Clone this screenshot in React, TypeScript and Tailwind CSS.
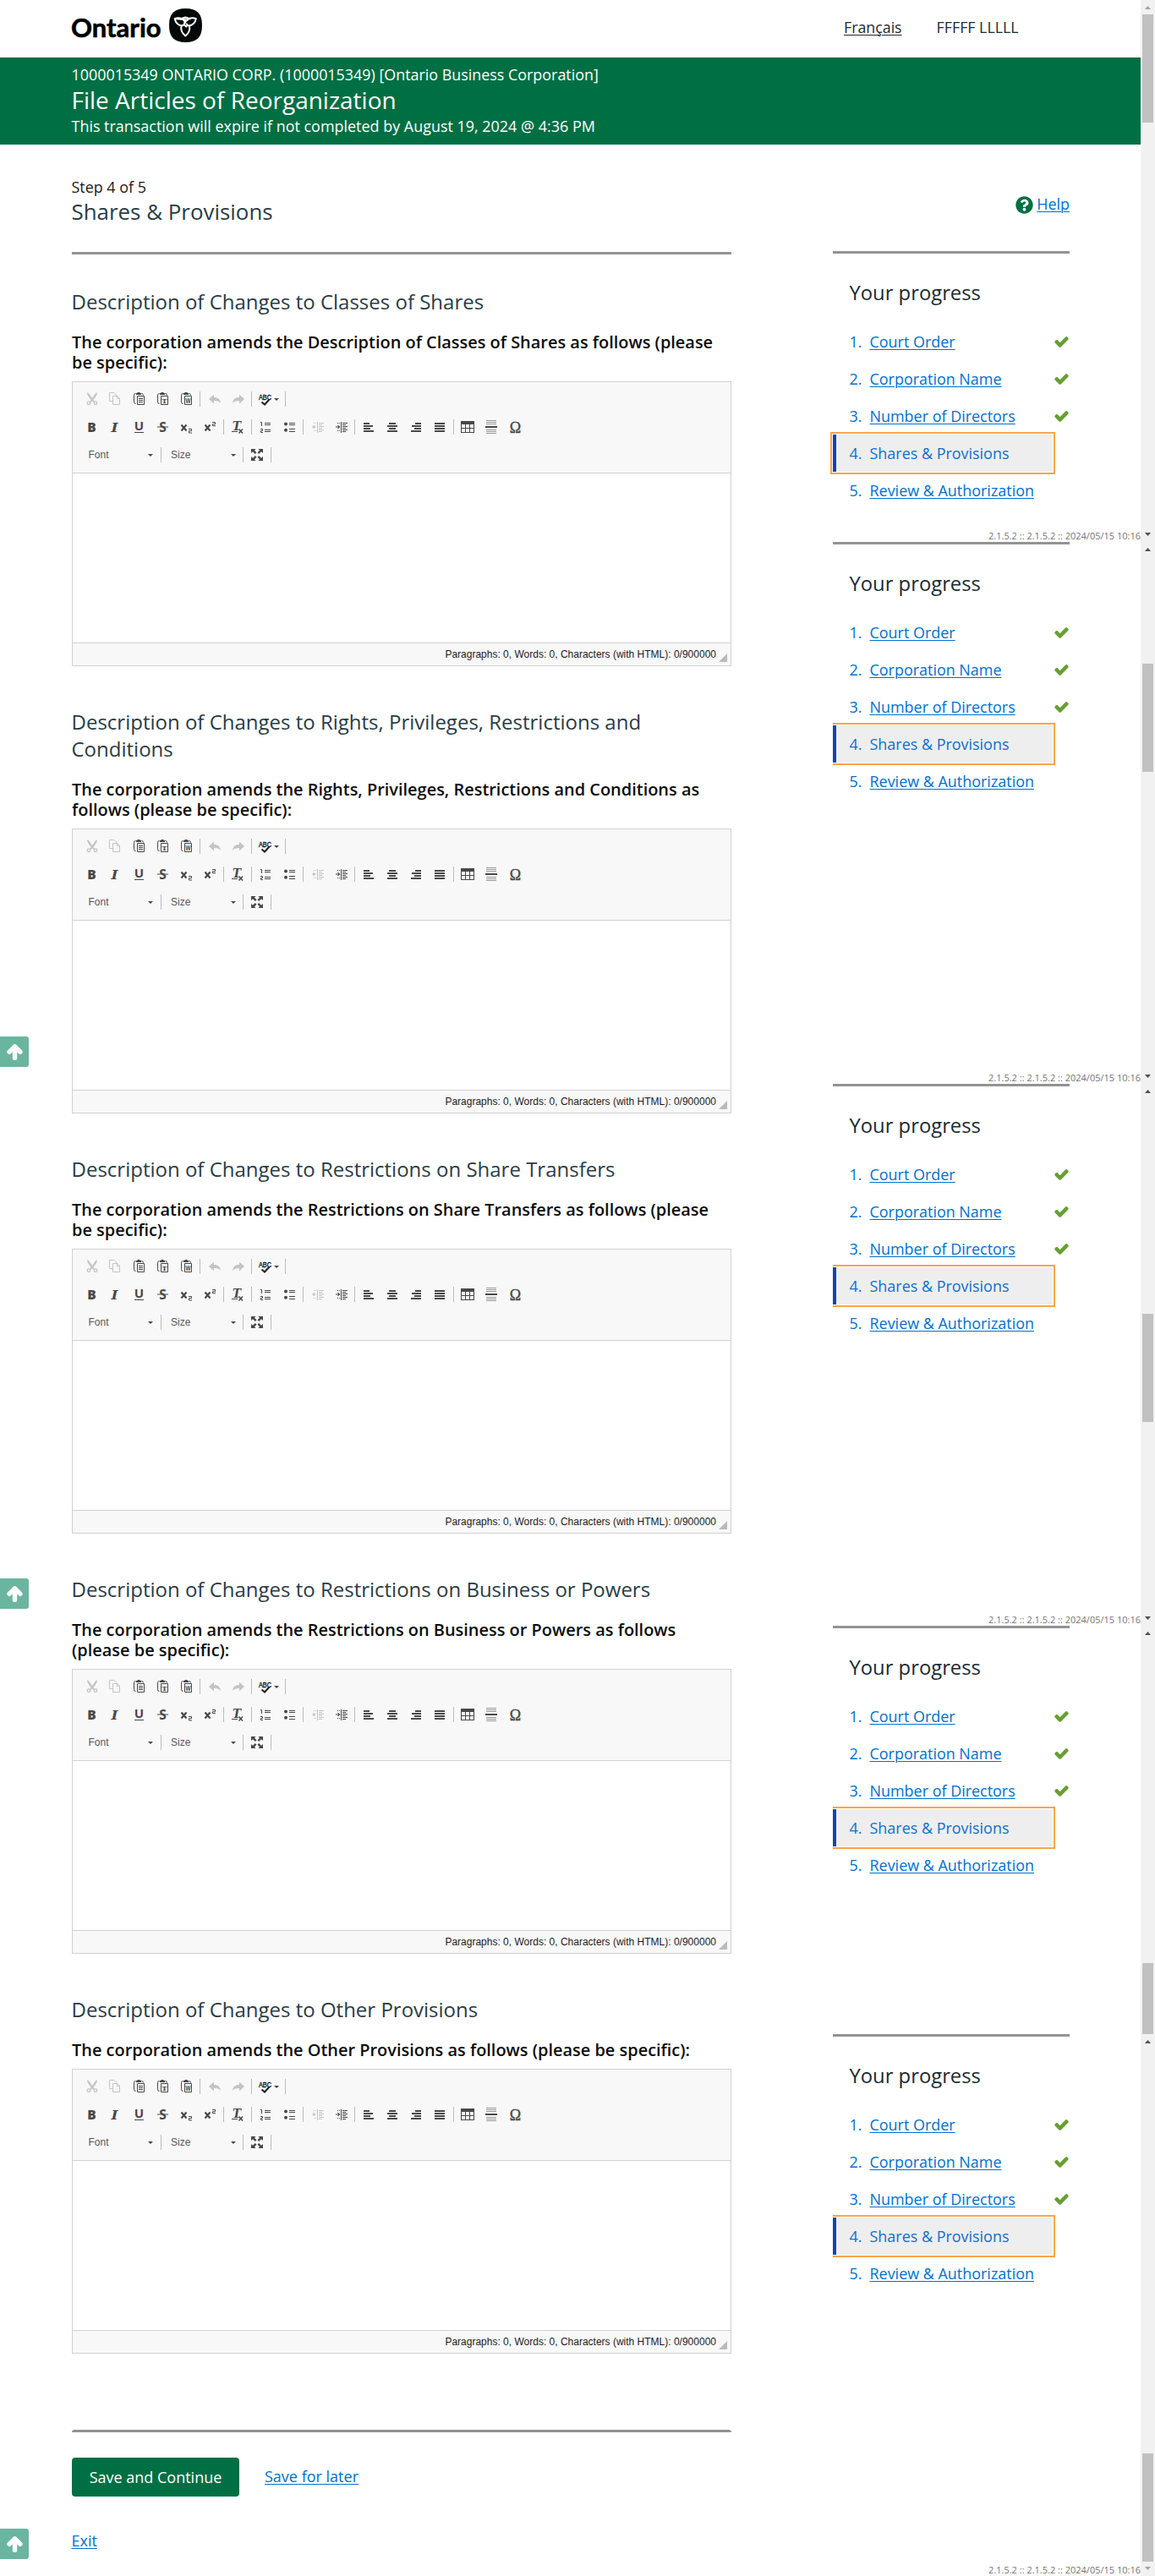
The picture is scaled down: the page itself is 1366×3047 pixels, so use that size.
import type { ReactNode } from "react";
import { FaArrowUp, FaCheck, FaQuestionCircle } from "react-icons/fa";

const DARK = "#484848";
const LIGHT = "#c4c4c4";

function Glyph({ children, light }: { children: ReactNode; light?: boolean }) {
  const c = light ? LIGHT : DARK;
  return (
    <svg viewBox="0 0 16 16" width="16" height="16" fill={c} stroke="none" className="mt-px shrink-0 overflow-visible" aria-hidden="true">
      {children}
    </svg>
  );
}

function Btn({ children, light }: { children: ReactNode; light?: boolean }) {
  return (
    <button type="button" className="flex w-7 shrink-0 justify-center">
      <Glyph light={light}>{children}</Glyph>
    </button>
  );
}

function Sep() {
  return <span className="ml-px mr-[3px] h-[18px] w-px shrink-0 bg-[#bcbcbc]" />;
}

function Caret() {
  return (
    <svg viewBox="0 0 6 3" width="6" height="3" fill={DARK} aria-hidden="true">
      <path d="M0 0h6L3 3z" />
    </svg>
  );
}

function Clipboard({ children }: { children: ReactNode }) {
  return (
    <>
      <path d="M3.5 1.5Q1.5 1.5 1.5 3.5V11.5Q1.5 13.5 3.5 13.500M10.500 1.500Q12.500 1.500 12.500 3.500" fill="none" stroke={DARK} />
      <path d="M4 1h1.500V0h3v1H10v2H4z" />
      <path d="M5.500 4.500h8v10h-8z" fill="#f8f8f8" stroke={DARK} />
      {children}
    </>
  );
}

const sans = "'Open Sans', sans-serif";
const serif = "'DejaVu Serif', serif";

function ToolbarRows() {
  return (
    <>
      <div className="flex h-[33px] items-start">
        <Btn light>
          <path d="M2 0.500Q3.500 0 4.500 2L8 7l3.500-5Q12.500 0 14 0.500Q14 3 12 5.500L9.300 9l1.700 2.200-1.300.8L8 10.500 6.300 12 5 11.200 6.700 9 4 5.500Q2 3 2 .500z" />
          <circle cx="4" cy="12.700" r="1.800" fill="none" stroke={LIGHT} strokeWidth="1.300" />
          <circle cx="12" cy="12.700" r="1.800" fill="none" stroke={LIGHT} strokeWidth="1.300" />
        </Btn>
        <Btn light>
          <path d="M4 10.500H.5V.500H6L8.500 3V4.500" fill="none" stroke={LIGHT} />
          <path d="M4.500 4.500H10L12.500 7.500V14.500H4.500zM9.500 4.500V7.500H12.500" fill="none" stroke={LIGHT} />
        </Btn>
        <Btn>
          <Clipboard>
            <path d="M7 7h5v1H7zM7 9h5v1H7zM7 11h5v1H7z" />
          </Clipboard>
        </Btn>
        <Btn>
          <Clipboard>
            <text x="9.500" y="12.500" fontSize="8" fontWeight="700" fontFamily={serif} textAnchor="middle" textLength="6" lengthAdjust="spacingAndGlyphs">T</text>
          </Clipboard>
        </Btn>
        <Btn>
          <Clipboard>
            <text x="9.500" y="12.500" fontSize="8" fontWeight="700" fontFamily={sans} textAnchor="middle" textLength="6" lengthAdjust="spacingAndGlyphs">W</text>
          </Clipboard>
        </Btn>
        <Sep />
        <Btn light>
          <path d="M1 8l6-5.500V6c5 0 7.500 2.500 8 7-1.500-2-4-3-8-3v3.500z" />
        </Btn>
        <Btn light>
          <path d="M15 8L9 2.500V6C4 6 1.500 8.500 1 13c1.500-2 4-3 8-3v3.500z" />
        </Btn>
        <Sep />
        <button type="button" className="flex w-[35px] shrink-0 justify-start pl-[5px]">
          <Glyph>
            <text x="0" y="8.800" fontSize="9" fill="#000" stroke="#000" strokeWidth="0.300" fontFamily="'Liberation Sans', sans-serif" textLength="15" lengthAdjust="spacingAndGlyphs">ABC</text>
            <path d="M3.500 11.500L7 14.500 12.500 8.500" fill="none" stroke="#222" strokeWidth="2" />
          </Glyph>
          <span className="ml-[2px] mt-[8px]"><Caret /></span>
        </button>
        <Sep />
      </div>

      <div className="flex h-[33px] items-start">
        <Btn>
          <text x="7.500" y="13.500" fontSize="15.500" fontWeight="800" fontFamily={sans} textAnchor="middle">B</text>
        </Btn>
        <Btn>
          <text x="6.500" y="13.500" fontSize="15" fontWeight="700" fontStyle="italic" fontFamily={serif} textAnchor="middle" textLength="8" lengthAdjust="spacingAndGlyphs">I</text>
        </Btn>
        <Btn>
          <text x="7.500" y="12" fontSize="15" fontWeight="700" fontFamily={sans} textAnchor="middle">U</text>
          <path d="M2 14h11v1H2z" />
        </Btn>
        <Btn>
          <text x="7.500" y="13.500" fontSize="15.500" fontWeight="700" fontFamily={sans} textAnchor="middle">S</text>
          <path d="M1 7.500h13v1H1z" />
        </Btn>
        <Btn>
          <path d="M1.500 5.500l6 7M7.500 5.500l-6 7" fill="none" stroke={DARK} strokeWidth="2.200" />
          <path d="M10 10.500h3.500v2.200h-3v2.300H14" fill="none" stroke={DARK} />
        </Btn>
        <Btn>
          <path d="M1.500 5.500l6 7M7.500 5.500l-6 7" fill="none" stroke={DARK} strokeWidth="2.200" />
          <path d="M10 2.500h3.500v2.200h-3v2H14" fill="none" stroke={DARK} />
        </Btn>
        <Sep />
        <Btn>
          <text x="6" y="12" fontSize="14" fontWeight="700" fontStyle="italic" fontFamily={serif} textAnchor="middle" textLength="10" lengthAdjust="spacingAndGlyphs">T</text>
          <path d="M0 13h7v1H0z" />
          <path d="M8.500 10.500l4.500 5M13 10.500l-4.500 5" fill="none" stroke={DARK} strokeWidth="1.500" />
        </Btn>
        <Sep />
        <Btn>
          <path d="M1 2.500h1.500V7M1 10.500h2.500v2H1.500v2H4" fill="none" stroke={DARK} />
          <path d="M6 3h7v1H6zM6 5h7v1H6zM6 11h7v1H6zM6 13h7v1H6z" />
        </Btn>
        <Btn>
          <circle cx="3" cy="4.500" r="2" />
          <circle cx="3" cy="11.700" r="2" />
          <path d="M7 3h7v1H7zM7 5h7v1H7zM7 10h7v1H7zM7 13h7v1H7z" />
        </Btn>
        <Sep />
        <Btn light>
          <path d="M7 2h1v13H7zM9 3h6v1H9zM9 5h4v1H9zM9 7h6v1H9zM9 9h4v1H9zM9 11h6v1H9zM9 13h4v1H9zM3 3h1v1H3zM5 3h1v1H5zM3 12h1v1H3zM5 12h1v1H5z" />
          <path d="M4 5.500v5L1 8zM4 7.500h2v1H4z" />
        </Btn>
        <Btn>
          <path d="M7 2h1v13H7zM9 3h6v1H9zM9 5h4v1H9zM9 7h6v1H9zM9 9h4v1H9zM9 11h6v1H9zM9 13h4v1H9zM3 3h1v1H3zM5 3h1v1H5zM3 12h1v1H3zM5 12h1v1H5z" />
          <path d="M3.500 5.500v5L6.500 8zM1 7.500h3v1H1z" />
        </Btn>
        <Sep />
        <Btn>
          <path d="M1 3h7v2H1zM1 6h11v2H1zM1 9h8v2H1zM1 12h12v2H1z" />
        </Btn>
        <Btn>
          <path d="M3 3h8v2H3zM1 6h12v2H1zM3 9h8v2H3zM1 12h12v2H1z" />
        </Btn>
        <Btn>
          <path d="M6 3h7v2H6zM2 6h11v2H2zM5 9h8v2H5zM1 12h12v2H1z" />
        </Btn>
        <Btn>
          <path d="M1 3h12v2H1zM1 6h12v2H1zM1 9h12v2H1zM1 12h12v2H1z" />
        </Btn>
        <Sep />
        <Btn>
          <path fillRule="evenodd" d="M-1 1h16v14H-1zM0 5v4h4V5zM5 5v4h4V5zM10 5v4h4V5zM0 10v4h4v-4zM5 10v4h4v-4zM10 10v4h4v-4z" />
        </Btn>
        <Btn>
          <path d="M1 0h12v1H1zM1 2h12v1H1zM1 4h12v1H1zM1 11h12v1H1zM1 13h12v1H1zM1 15h12v1H1z" fill="#999" />
          <path d="M0 7h14v2H0z" />
        </Btn>
        <Btn>
          <text x="7.500" y="14.500" fontSize="18" fontWeight="400" stroke={DARK} strokeWidth="0.400" fontFamily="'Liberation Serif', serif" textAnchor="middle">Ω</text>
        </Btn>
      </div>

      <div className="flex items-start font-['Liberation_Sans',sans-serif] text-[12px] leading-[18px] text-[#575757]">
        <button type="button" className="ml-1 flex w-[90px] items-center justify-between pl-1 pr-[8px] text-left">
          <span className="pl-[1.5px]">Font</span>
          <Caret />
        </button>
        <span className="ml-[1px] h-[18px] w-px bg-[#bcbcbc]" />
        <button type="button" className="flex w-[96px] items-center justify-between pl-[11px] pr-[8px] text-left">
          <span>Size</span>
          <Caret />
        </button>
        <span className="mr-[3px] h-[18px] w-px bg-[#bcbcbc]" />
        <Btn>
          <path d="M0 1h5.500L4 2.700l2.500 2.500-1.700 1.700L2 4.300 0 6zM14 1v5l-2-1.700-2.800 2.600-1.700-1.700L10 2.700 8.500 1zM0 15V10l2 1.700 2.800-2.600 1.700 1.700L4 13.300 5.500 15zM14 15H8.500L10 13.300 7.500 10.800l1.700-1.700L12 11.700 14 10z" />
        </Btn>
        <Sep />
      </div>
    </>
  );
}

function Editor() {
  return (
    <div className="mt-[10px] flex h-[337px] flex-col border border-[#d1d1d1]">
      <div className="h-[108px] shrink-0 border-b border-[#d1d1d1] bg-[#f8f8f8] pl-[9px] pt-[11px]">
        <ToolbarRows />
      </div>
      <div className="flex-1 bg-white" />
      <div className="flex h-[27px] items-center justify-end border-t border-[#d1d1d1] bg-[#f8f8f8] pr-1 font-['Liberation_Sans',sans-serif] text-[12px] leading-4 text-[#1c1c1c]">
        <span>Paragraphs: 0, Words: 0, Characters (with HTML): 0/900000</span>
        <svg viewBox="0 0 10 10" width="10" height="10" className="ml-[3px] mt-2" fill="#bababa" aria-hidden="true">
          <path d="M10 0v10H0z" />
        </svg>
      </div>
    </div>
  );
}

const SECTIONS = [
  {
    title: "Description of Changes to Classes of Shares",
    label: "The corporation amends the Description of Classes of Shares as follows (please be specific):",
  },
  {
    title: "Description of Changes to Rights, Privileges, Restrictions and Conditions",
    label: "The corporation amends the Rights, Privileges, Restrictions and Conditions as follows (please be specific):",
  },
  {
    title: "Description of Changes to Restrictions on Share Transfers",
    label: "The corporation amends the Restrictions on Share Transfers as follows (please be specific):",
  },
  {
    title: "Description of Changes to Restrictions on Business or Powers",
    label: "The corporation amends the Restrictions on Business or Powers as follows (please be specific):",
  },
  {
    title: "Description of Changes to Other Provisions",
    label: "The corporation amends the Other Provisions as follows (please be specific):",
  },
];

const STEPS = [
  { name: "Court Order", done: true },
  { name: "Corporation Name", done: true },
  { name: "Number of Directors", done: true },
  { name: "Shares & Provisions", current: true },
  { name: "Review & Authorization" },
];

const PANELS = [
  { height: "h-[344px]", version: true, clip: false },
  { height: "h-[641px]", version: true, clip: true },
  { height: "h-[641px]", version: true, clip: true },
  { height: "h-[483px]", version: false, clip: true },
  { height: "h-[641px]", version: true, clip: true },
];

function Progress({ height, version, clip }: { height: string; version: boolean; clip: boolean }) {
  return (
    <section className={`relative shrink-0 ${height}`}>
      <div className="h-[3px] bg-[#939393]" />
      <h2 className="pl-[19.5px] pt-[30px] text-[23.8px] leading-8 text-[#1a2b33]">Your progress</h2>
      <ol className="mt-5 text-[17.95px] leading-6 text-[#0071ce]">
        {STEPS.map((s, i) => (
          <li key={s.name} className={clip ? "flex h-11 items-center justify-between [clip-path:inset(-4px_-4px_-4px_0)]" : "flex h-11 items-center justify-between"}>
            <a
              className={
                s.current
                  ? "flex h-11 w-[260px] items-center border-l-4 border-[#0f47ab] bg-[#eee] pl-[15.5px] text-[#1070cb] outline-2 outline-offset-1 outline-[#ffa347]"
                  : "flex h-11 w-[260px] items-center pl-[19.5px]"
              }
            >
              <span className="w-6">{i + 1}.</span>
              <span className={s.current ? "" : "underline decoration-1 underline-offset-2"}>{s.name}</span>
            </a>
            {s.done && <FaCheck size={15} stroke="currentColor" strokeWidth={50} className="mr-[2px] shrink-0 overflow-visible text-[#669f33]" />}
          </li>
        ))}
      </ol>
      {version && (
        <span className="absolute bottom-0 right-[-84px] whitespace-nowrap text-[11px] leading-[15px] text-[#757575]">
          2.1.5.2 :: 2.1.5.2 :: 2024/05/15 10:16
        </span>
      )}
    </section>
  );
}

function BackToTop({ place }: { place: string }) {
  return (
    <button type="button" aria-label="Back to top" className={`absolute left-0 flex h-9 w-[34px] items-center justify-center rounded-r-[3px] bg-[#6ab5a0] text-white ${place}`}>
      <FaArrowUp size={19} stroke="currentColor" strokeWidth={65} strokeLinejoin="round" className="overflow-visible" />
    </button>
  );
}

const TRACKS = [
  { height: "h-[641px]", before: "h-[17px]", thumb: "h-[128px]", up: "#a3a3a3", down: "#505050" },
  { height: "h-[641px]", before: "h-[144px]", thumb: "h-[128px]", up: "#505050", down: "#505050" },
  { height: "h-[641px]", before: "h-[272px]", thumb: "h-[128px]", up: "#505050", down: "#505050" },
  { height: "h-[483px]", before: "h-[399px]", thumb: "h-[84px]", up: "#505050", down: "" },
  { height: "h-[641px]", before: "h-[496px]", thumb: "h-[128px]", up: "#505050", down: "#a3a3a3" },
];

function Scrollbars() {
  return (
    <div className="w-[17px] shrink-0 bg-[#f1f1f1]">
      {TRACKS.map((t, i) => (
        <div key={i} className={`flex flex-col items-center ${t.height}`}>
          <div className={`shrink-0 pt-[7px] ${t.before}`}>
            <svg viewBox="0 0 7 4" width="7" height="4" fill={t.up} className="block">
              <path d="M0 4L3.500 0 7 4z" />
            </svg>
          </div>
          <div className={`w-[13px] shrink-0 bg-[#c1c1c1] ${t.thumb}`} />
          {t.down && (
            <svg viewBox="0 0 7 4" width="7" height="4" fill={t.down} className="mb-[7px] mt-auto block">
              <path d="M0 0h7L3.500 4z" />
            </svg>
          )}
        </div>
      ))}
    </div>
  );
}

function Logo() {
  return (
    <div className="-ml-px flex h-10 items-center text-black">
      <span className="mt-[4px] w-[116px] font-['Lato',sans-serif] text-[31px] font-bold leading-8 [-webkit-text-stroke:0.6px_black]">Ontario</span>
      <svg viewBox="0 0 39 40" width="39" height="40" aria-hidden="true">
        <path d="M19.500 0C33 0 39 6 39 20S33 40 19.500 40 0 34 0 20 6 0 19.500 0z" fill="#050808" />
        <g fill="none" stroke="#fff" strokeWidth="2" strokeLinejoin="round" strokeLinecap="round">
          <path d="M6.800 12C11 10.700 15 11.800 17 13.500M14 12.300L19.300 10.500L24.500 12.300M21.500 13.500C23.500 11.800 27.500 10.700 31.800 12C31 16.500 28 19.500 24 20.500C25 25 23 29.500 19.300 32.500C15.500 29.500 13.500 25 14.500 20.500C10.500 19.500 7.500 16.500 6.800 12z" />
          <path d="M17 13.500L19.500 17M22 13.500C17.500 15.500 16.500 19.500 20.500 21.500M15 20.500L17 19.500M24 20.200C22 20.500 21 19.500 21 18.500" />
        </g>
      </svg>
    </div>
  );
}

export default function App() {
  return (
    <div className="flex h-[3047px] w-[1366px] overflow-hidden bg-white font-['Open_Sans',sans-serif] text-black">
      <div className="relative flex w-[1349px] shrink-0 flex-col">
        <header className="flex h-[68px] shrink-0 items-start pl-[85px] pt-[10px]">
          <Logo />
          <nav className="ml-[759px] flex gap-[41px] pt-[10px] text-[17.8px] leading-6 text-[#1a2b33]">
            <a className="underline decoration-1 underline-offset-2">Français</a>
            <span>FFFFF LLLLL</span>
          </nav>
        </header>

        <div className="h-[103px] shrink-0 bg-[#006f44] pl-[84.5px] pt-2 text-[17.9px] leading-6 text-white">
          <p>1000015349 ONTARIO CORP. (1000015349) [Ontario Business Corporation]</p>
          <h1 className="text-[28px] leading-9">File Articles of Reorganization</h1>
          <p className="mt-px text-[17.95px]">This transaction will expire if not completed by August 19, 2024 @ 4:36 PM</p>
        </div>

        <div className="flex pl-[85px]">
          <main className="w-[780px] shrink-0 pt-[38px]">
            <p className="-ml-[0.5px] text-[17.9px] leading-6 text-[#1a1a1a]">Step 4 of 5</p>
            <h2 className="-ml-[0.5px] mt-px text-[25.9px] leading-8 text-[#2b3c45]">Shares &amp; Provisions</h2>
            <div className="mb-10 mt-8 h-[3px] bg-[#939393]" />
            <div className="flex flex-col gap-[50px]">
              {SECTIONS.map((s) => (
                <section key={s.title}>
                  <h3 className="-ml-[0.5px] text-[24px] leading-8 text-[#2b3c45]">{s.title}</h3>
                  <p className="mt-5 text-[19.95px] font-semibold leading-6 text-[#0c0c0c]">{s.label}</p>
                  <Editor />
                </section>
              ))}
            </div>
            <div className="mt-[90px] h-[3px] rounded-t-[3px] bg-[#939393]" />
            <div className="mt-[30px] flex items-center">
              <button type="button" className="h-[46px] w-[198px] rounded-[4px] bg-[#006f44] text-[18px] leading-6 text-white">
                Save and Continue
              </button>
              <a className="-mt-[3px] ml-[30px] text-[18px] leading-6 text-[#0071ce] underline decoration-1 underline-offset-2">Save for later</a>
            </div>
            <a className="-ml-[0.5px] mt-10 block text-[18px] leading-6 text-[#0071ce] underline decoration-1 underline-offset-2">Exit</a>
          </main>

          <aside className="ml-[120px] w-[280px] shrink-0">
            <div className="flex h-[126px] items-start justify-end gap-1 pt-[58px] text-[17.9px] leading-6 text-[#0071ce]">
              <FaQuestionCircle size={21} className="mt-[3px] text-[#006f44]" />
              <a className="underline decoration-1 underline-offset-2">Help</a>
            </div>
            {PANELS.map((p, i) => (
              <Progress key={i} {...p} />
            ))}
          </aside>
        </div>

        <BackToTop place="top-[1226px]" />
        <BackToTop place="top-[1867px]" />
        <BackToTop place="top-[2991px]" />
      </div>
      <Scrollbars />
    </div>
  );
}
